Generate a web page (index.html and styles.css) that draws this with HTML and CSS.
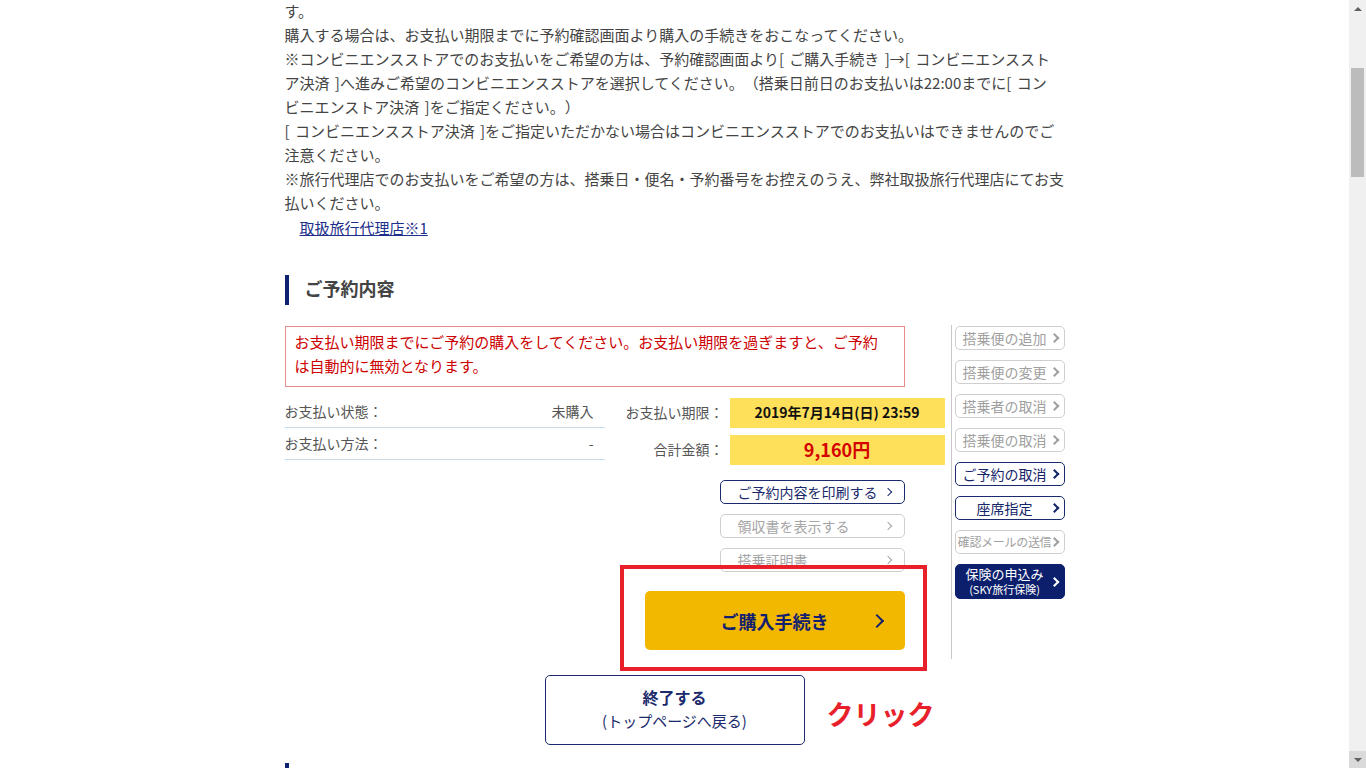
FILE: index.html
```html
<!DOCTYPE html>
<html lang="ja">
<head>
    <meta charset="UTF-8">
    <meta name="viewport" content="width=device-width, initial-scale=1.0">
    <title>ご予約内容の確認</title>
    <link rel="stylesheet" href="styles.css">
</head>
<body>
    <div class="page">
        <div class="content">
            <p class="notes">す。<br>購入する場合は、お支払い期限までに予約確認画面より購入の手続きをおこなってください。<br>※コンビニエンスストアでのお支払いをご希望の方は、予約確認画面より[ ご購入手続き ]→[ コンビニエンススト<br>ア決済 ]へ進みご希望のコンビニエンスストアを選択してください。（搭乗日前日のお支払いは22:00までに[ コン<br>ビニエンストア決済 ]をご指定ください。）<br>[ コンビニエンスストア決済 ]をご指定いただかない場合はコンビニエンスストアでのお支払いはできませんのでご注意ください。<br>※旅行代理店でのお支払いをご希望の方は、搭乗日・便名・予約番号をお控えのうえ、弊社取扱旅行代理店にてお支払いください。</p>
            <a class="agent-link" href="#">取扱旅行代理店※1</a>

            <h2 class="sec-title">ご予約内容</h2>

            <div class="detail">
                <div class="detail-main">
                    <div class="notice">お支払い期限までにご予約の購入をしてください。お支払い期限を過ぎますと、ご予約は自動的に無効となります。</div>

                    <div class="summary">
                        <div class="status-list">
                            <div class="status-row"><span>お支払い状態：</span><span>未購入</span></div>
                            <div class="status-row"><span>お支払い方法：</span><span>-</span></div>
                        </div>
                        <div class="pay-info">
                            <div class="pay-row">
                                <span class="pay-label">お支払い期限：</span>
                                <span class="pay-value">2019年7月14日(日) 23:59</span>
                            </div>
                            <div class="pay-row">
                                <span class="pay-label">合計金額：</span>
                                <span class="pay-value amount">9,160円</span>
                            </div>
                        </div>
                    </div>

                    <div class="doc-buttons">
                        <a class="doc-btn on" href="#">ご予約内容を印刷する</a>
                        <a class="doc-btn" href="#">領収書を表示する</a>
                        <a class="doc-btn" href="#">搭乗証明書</a>
                    </div>

                    <div class="purchase">
                        <a class="btn-purchase" href="#">ご購入手続き</a>
                        <span class="mark-box"></span>
                    </div>
                </div>

                <div class="side">
                    <a class="side-btn" href="#">搭乗便の追加</a>
                    <a class="side-btn" href="#">搭乗便の変更</a>
                    <a class="side-btn" href="#">搭乗者の取消</a>
                    <a class="side-btn" href="#">搭乗便の取消</a>
                    <a class="side-btn on" href="#">ご予約の取消</a>
                    <a class="side-btn on" href="#">座席指定</a>
                    <a class="side-btn small" href="#">確認メールの送信</a>
                    <a class="side-btn insure" href="#"><span>保険の申込み</span><span class="sub">(SKY旅行保険)</span></a>
                </div>
            </div>

            <div class="finish">
                <a class="btn-finish" href="#"><strong>終了する</strong><span>(トップページへ戻る)</span></a>
                <span class="mark-text">クリック</span>
            </div>

            <h2 class="sec-title next">ご搭乗便</h2>
        </div>
    </div>

    <div class="scrollbar">
        <span class="sb-arrow up"></span>
        <span class="sb-thumb"></span>
        <span class="sb-arrow down"></span>
    </div>
</body>
</html>
```

FILE: styles.css
```css
html, body {
    height: 100%;
}
body {
    margin: 0;
    font-family: "Noto Sans CJK JP", "Noto Sans", sans-serif;
    color: #444;
    background-color: #fff;
    display: flex;
    overflow: hidden;
    text-spacing-trim: space-all;
}
a {
    text-decoration: none;
}
.page {
    flex: 1;
    overflow: hidden;
}
.content {
    width: 780px;
    margin: -1px auto 0;
}
.notes {
    margin: 0;
    font-size: 15px;
    line-height: 24px;
    word-spacing: 2px;
}
.agent-link {
    display: inline-block;
    margin-left: 15px;
    font-size: 15px;
    line-height: 24px;
    color: #1d2f8a;
    text-decoration: underline;
}
.sec-title {
    margin: 35px 0 0;
    border-left: 4px solid #0d2170;
    padding: 0 0 3px 16px;
    font-size: 18px;
    line-height: 27px;
    font-weight: bold;
    color: #444;
}
.sec-title.next {
    margin-top: 18px;
}

/* 予約内容ブロック */
.detail {
    display: flex;
    margin-top: 20px;
}
.detail-main {
    width: 666px;
    padding-bottom: 9px;
}
.notice {
    margin-top: 1px;
    width: 620px;
    box-sizing: border-box;
    border: 1px solid #e98b8b;
    padding: 3px 12px 8px 9px;
    color: #cc0000;
    font-size: 15px;
    line-height: 24px;
}
.summary {
    display: flex;
    margin-top: 9px;
}
.status-list {
    width: 320px;
}
.status-row {
    display: flex;
    justify-content: space-between;
    align-items: center;
    height: 29px;
    padding: 0 11px 2px 0;
    border-bottom: 1px solid #c5dcee;
    font-size: 14px;
    color: #555;
}
.pay-info {
    margin-left: 15px;
    padding-top: 2px;
    display: flex;
    flex-direction: column;
    gap: 7px;
}
.pay-row {
    display: flex;
    align-items: center;
    gap: 6px;
}
.pay-label {
    width: 104px;
    text-align: right;
    font-size: 14px;
    color: #555;
    padding-bottom: 2px;
}
.pay-value {
    width: 215px;
    height: 28px;
    padding-bottom: 2px;
    display: flex;
    align-items: center;
    justify-content: center;
    background-color: #fee05a;
    font-size: 14px;
    font-weight: bold;
    color: #111;
}
.pay-value.amount {
    font-size: 18px;
    color: #d40000;
}

/* 右向き矢印 */
.doc-btn::after,
.side-btn::after,
.btn-purchase::after {
    content: "";
    position: absolute;
    top: 50%;
    width: 5px;
    height: 5px;
    border-top: 1.5px solid currentColor;
    border-right: 1.5px solid currentColor;
    transform: translateY(-50%) rotate(45deg);
}
.doc-buttons {
    margin: 15px 0 0 435px;
    width: 185px;
    display: flex;
    flex-direction: column;
    gap: 10px;
}
.doc-btn {
    position: relative;
    height: 24px;
    box-sizing: border-box;
    display: flex;
    align-items: center;
    padding: 0 0 1px 17px;
    border: 1px solid #cfcfcf;
    border-radius: 5px;
    font-size: 14px;
    color: #a5a5a5;
}
.doc-btn::after {
    right: 13px;
}
.doc-btn.on {
    border-color: #1a2a6c;
    color: #1a2a6c;
}
.purchase {
    position: relative;
    width: 260px;
    margin: 19px 0 0 360px;
}
.btn-purchase {
    position: relative;
    height: 59px;
    display: flex;
    align-items: center;
    justify-content: center;
    background-color: #f2b800;
    border-radius: 5px;
    font-size: 18px;
    font-weight: bold;
    color: #132070;
}
.btn-purchase::after {
    right: 23px;
    width: 8px;
    height: 8px;
    border-width: 2.5px;
}
.mark-box {
    position: absolute;
    left: -25px;
    top: -26px;
    right: -22px;
    bottom: -21px;
    border: 4px solid #e8202a;
    pointer-events: none;
}

/* サイドメニュー */
.side {
    border-left: 1px solid #c8c8c8;
    padding: 1px 0 0 3px;
    display: flex;
    flex-direction: column;
    gap: 10px;
}
.side-btn {
    position: relative;
    width: 110px;
    height: 24px;
    box-sizing: border-box;
    display: flex;
    align-items: center;
    justify-content: center;
    padding: 0 12px 1px 2px;
    border: 1px solid #cfcfcf;
    border-radius: 5px;
    font-size: 14px;
    color: #a0a0a0;
    white-space: nowrap;
}
.side-btn::after {
    right: 6px;
    border-width: 2px;
}
.side-btn.on {
    border-color: #1a2a6c;
    color: #142468;
}
.side-btn.small {
    font-size: 12px;
    letter-spacing: -0.3px;
}
.side-btn.insure {
    height: 35px;
    flex-direction: column;
    background-color: #0c1f6d;
    border-color: #0c1f6d;
    color: #fff;
    font-size: 13px;
    line-height: 16px;
}
.side-btn.insure .sub {
    font-size: 11px;
    line-height: 14px;
}

/* 終了ボタン */
.finish {
    position: relative;
    margin-top: 16px;
    display: flex;
    justify-content: center;
}
.btn-finish {
    width: 260px;
    height: 70px;
    box-sizing: border-box;
    display: flex;
    flex-direction: column;
    align-items: center;
    justify-content: center;
    padding-bottom: 3px;
    border: 1px solid #1a2a6c;
    border-radius: 5px;
    color: #1a2a6c;
    font-size: 15px;
    line-height: 24px;
}
.btn-finish strong {
    font-size: 16px;
}
.mark-text {
    position: absolute;
    left: 542px;
    top: 23px;
    font-size: 27px;
    line-height: 32px;
    font-weight: bold;
    color: #e8202a;
}

/* スクロールバー */
.scrollbar {
    width: 17px;
    height: 100%;
    background-color: #f0f0f0;
    display: flex;
    flex-direction: column;
}
.sb-arrow {
    height: 17px;
    display: flex;
    align-items: center;
    justify-content: center;
}
.sb-arrow::before {
    content: "";
    border-left: 4px solid transparent;
    border-right: 4px solid transparent;
}
.sb-arrow.up::before {
    border-bottom: 4px solid #606060;
}
.sb-arrow.down {
    margin-top: auto;
    background-color: #dadada;
}
.sb-arrow.down::before {
    border-top: 4px solid #606060;
}
.sb-thumb {
    margin: 51px 2px 0;
    height: 109px;
    background-color: #bcbcbc;
}
```
